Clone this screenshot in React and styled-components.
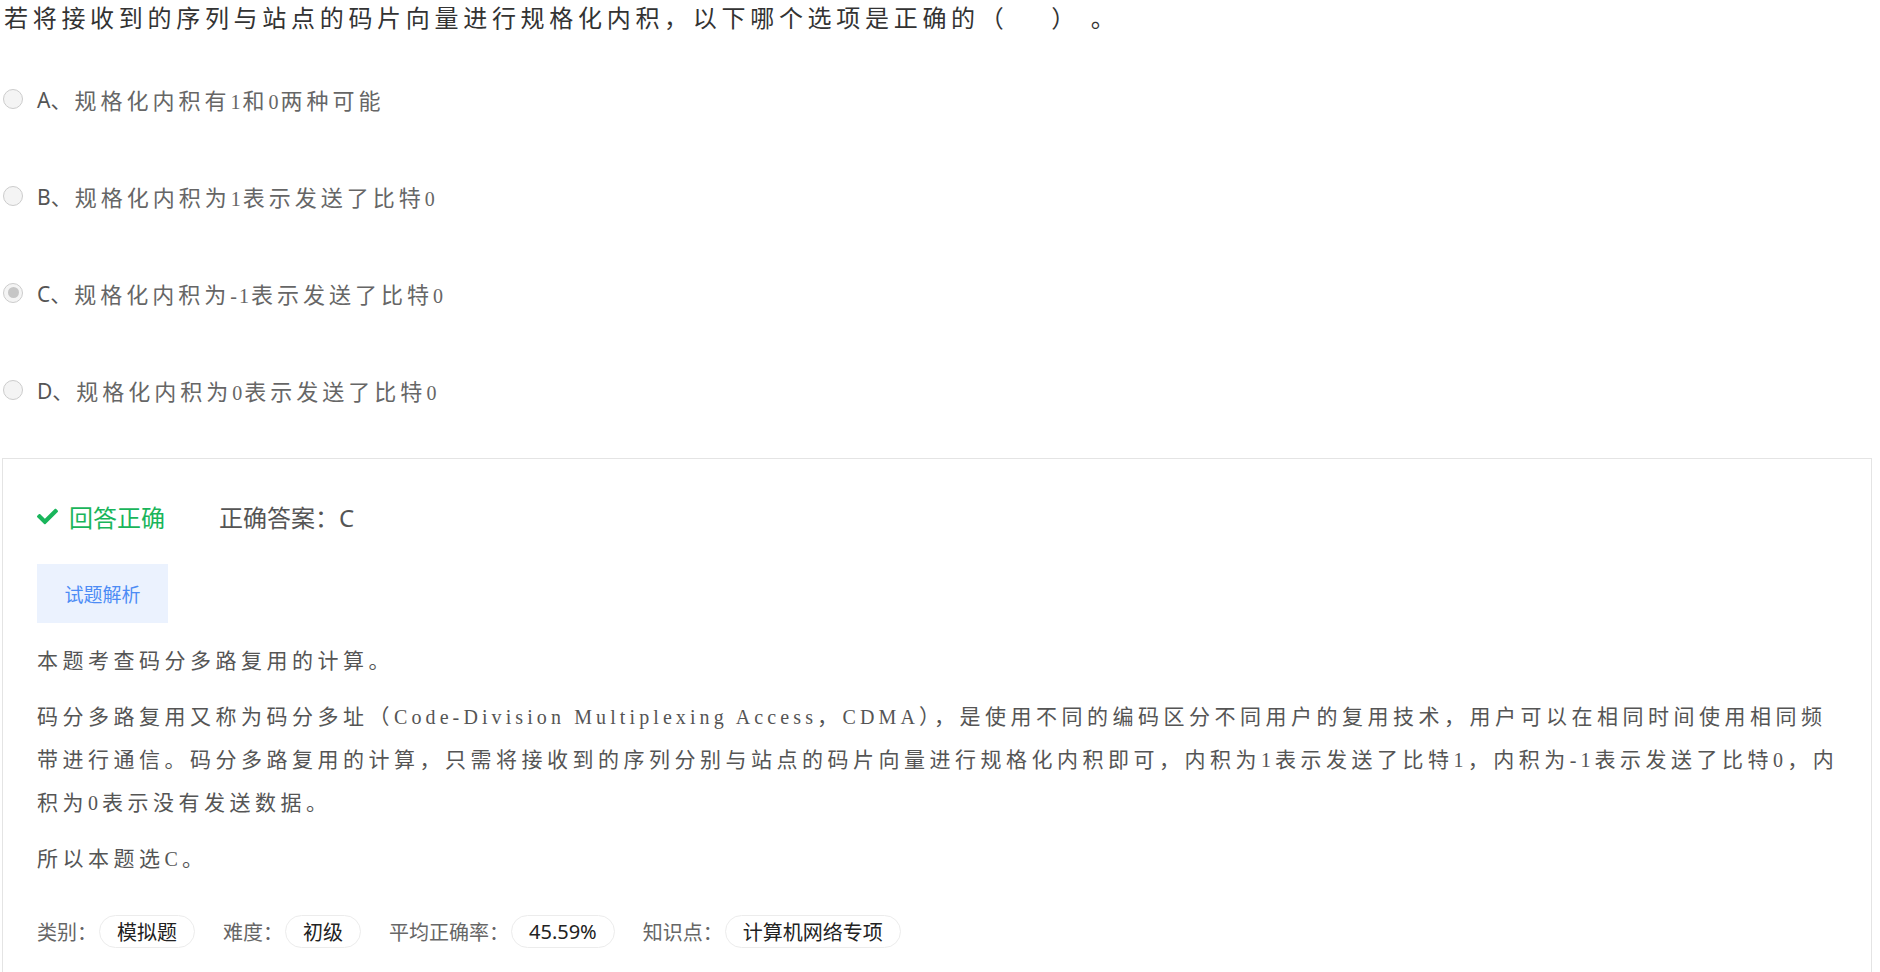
import React from 'react'
import styled, { createGlobalStyle } from 'styled-components'
import { FaCheck } from 'react-icons/fa'

const GlobalStyle = createGlobalStyle`
body {
  margin: 0;
  background: #fff;
  font-family: 'Noto Sans', 'Noto Sans CJK SC', sans-serif;
}
`

const SERIF = `'Liberation Serif', 'Noto Sans CJK SC', serif`
const SANS = `'Noto Sans', 'Noto Sans CJK SC', sans-serif`

// latin runs inside mixed text get their own size / spacing
const Latin = styled.span`
font-size: ${props => props.size || 20}px;
letter-spacing: ${props => props.spacing || 1}px;
`

const Mixed = ({ text, size, spacing }) =>
  text.split(/([\u0000-\u02ff]+)/).map((part, i) =>
    /^[\u0000-\u02ff]+$/.test(part)
      ? <Latin key={i} size={size} spacing={spacing}>{part}</Latin>
      : part
  )

const Page = styled.div`
display: flex;
flex-direction: column;
width: 1880px;
`
const Question = styled.h1`
margin: 0;
padding-left: 4px;
height: 38px;
line-height: 38px;
font-family: ${SERIF};
font-weight: 400;
font-size: 24px;
letter-spacing: 4.7px;
color: #333;
`
const Options = styled.ul`
list-style: none;
margin: 12px 0 0;
padding: 0;
display: flex;
flex-direction: column;
`
const Option = styled.li`
height: 97px;
display: flex;
align-items: center;
padding-left: 3px;
`
const Radio = styled.span`
width: 18px;
height: 18px;
border-radius: 50%;
border: 1px solid #cccccc;
background: #f4f4f4;
display: flex;
align-items: center;
justify-content: center;
margin-right: 14px;
flex-shrink: 0;
&::after {
  content: '';
  width: 11px;
  height: 11px;
  border-radius: 50%;
  background: ${props => props.checked ? '#c6c6c6' : 'transparent'};
}
`
const Letter = styled.span`
font-family: ${SANS};
font-size: 21px;
color: #555;
margin-right: 3px;
`
const OptionText = styled.span`
font-family: ${SERIF};
font-size: 22px;
letter-spacing: 4px;
color: #666;
`
const Result = styled.section`
margin: 20px 0 0 2px;
width: 1870px;
border: 1px solid #e4e4e4;
padding: 40px 24px 40px 34px;
box-sizing: border-box;
background: #fff;
`
const Status = styled.div`
height: 34px;
display: flex;
align-items: center;
font-family: ${SANS};
font-size: 24px;
`
const Correct = styled.span`
display: flex;
align-items: center;
gap: 11px;
color: #19b55b;
margin-right: 54px;
svg {
  width: 21px;
  height: 21px;
}
`
const Answer = styled.span`
color: #555;
`
const TabButton = styled.div`
margin-top: 31px;
width: 131px;
height: 59px;
display: flex;
align-items: center;
justify-content: center;
background: #ebf2fe;
color: #4d8cf5;
font-family: ${SANS};
font-size: 19px;
`
const Para = styled.p`
margin: 13px 0 0;
font-family: ${SERIF};
font-size: 21px;
line-height: 43px;
letter-spacing: 4.5px;
color: #555;
&:first-of-type {
  margin-top: 17px;
}
`
const Meta = styled.div`
margin-top: 34px;
display: flex;
align-items: center;
font-family: ${SANS};
`
const MetaLabel = styled.span`
font-size: 20px;
color: #666;
margin-right: 2px;
`
const Chip = styled.span`
height: 33px;
box-sizing: border-box;
padding: 0 17px;
border: 1px solid #ececec;
border-radius: 17px;
display: flex;
align-items: center;
font-size: 20px;
color: #222;
margin-right: 28px;
`

const options = [
  { key: 'A', text: '规格化内积有1和0两种可能' },
  { key: 'B', text: '规格化内积为1表示发送了比特0' },
  { key: 'C', text: '规格化内积为-1表示发送了比特0', checked: true },
  { key: 'D', text: '规格化内积为0表示发送了比特0' },
]

const paragraphs = [
  '本题考查码分多路复用的计算。',
  '码分多路复用又称为码分多址（Code-Division Multiplexing Access，CDMA），是使用不同的编码区分不同用户的复用技术，用户可以在相同时间使用相同频带进行通信。码分多路复用的计算，只需将接收到的序列分别与站点的码片向量进行规格化内积即可，内积为1表示发送了比特1，内积为-1表示发送了比特0，内积为0表示没有发送数据。',
  '所以本题选C。',
]

const meta = [
  { label: '类别：', value: '模拟题' },
  { label: '难度：', value: '初级' },
  { label: '平均正确率：', value: '45.59%' },
  { label: '知识点：', value: '计算机网络专项' },
]

export default function App() {
  return (
    <Page>
      <GlobalStyle />
      <Question>若将接收到的序列与站点的码片向量进行规格化内积，以下哪个选项是正确的（&nbsp;&nbsp;&nbsp;&nbsp;）&nbsp;。</Question>
      <Options>
        {options.map(o => (
          <Option key={o.key}>
            <Radio checked={o.checked} />
            <Letter>{o.key}、</Letter>
            <OptionText><Mixed text={o.text} size={20} spacing={2} /></OptionText>
          </Option>
        ))}
      </Options>
      <Result>
        <Status>
          <Correct><FaCheck />回答正确</Correct>
          <Answer>正确答案：C</Answer>
        </Status>
        <TabButton>试题解析</TabButton>
        {paragraphs.map((p, i) => (
          <Para key={i}><Mixed text={p} size={20} spacing={4.1} /></Para>
        ))}
        <Meta>
          {meta.map(m => (
            <React.Fragment key={m.label}>
              <MetaLabel>{m.label}</MetaLabel>
              <Chip>{m.value}</Chip>
            </React.Fragment>
          ))}
        </Meta>
      </Result>
    </Page>
  )
}
